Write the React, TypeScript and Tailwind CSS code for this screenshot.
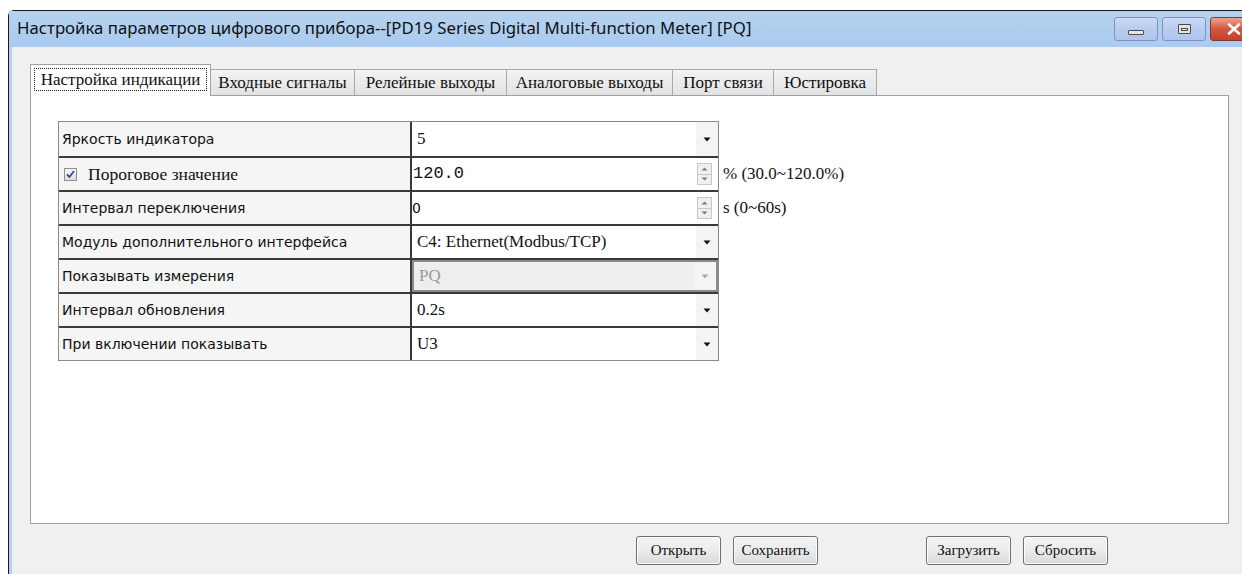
import type { ReactNode } from "react";

const tabs = [
  "Настройка индикации",
  "Входные сигналы",
  "Релейные выходы",
  "Аналоговые выходы",
  "Порт связи",
  "Юстировка",
];

const tabWidths = ["w-[181px]", "w-[145px]", "w-[153px]", "w-[167px]", "w-[102px]", "w-[104px]"];

function DropArrow({ muted = false }: { muted?: boolean }) {
  return (
    <div className="flex h-full w-[22px] items-center justify-center bg-[#f4f4f4]">
      <svg width="8" height="5" viewBox="0 0 8 5">
        <path d="M0.5 0.5h7L4 4.5z" fill={muted ? "#a8a8a8" : "#101010"} />
      </svg>
    </div>
  );
}

function Spinner() {
  return (
    <div className="mr-[6px] flex h-[22px] w-[15px] flex-col border border-[#c8c8c8] bg-[#eef0f3]">
      <div className="flex flex-1 items-center justify-center border-b border-[#c8c8c8]">
        <svg width="7" height="4" viewBox="0 0 7 4">
          <path d="M0.5 3.5L3.5 0.5 6.5 3.5z" fill="#6d7f94" />
        </svg>
      </div>
      <div className="flex flex-1 items-center justify-center">
        <svg width="7" height="4" viewBox="0 0 7 4">
          <path d="M0.5 0.5h6L3.5 3.5z" fill="#6d7f94" />
        </svg>
      </div>
    </div>
  );
}

function Row({
  label,
  children,
  first = false,
  disabled = false,
  suffix,
}: {
  label: ReactNode;
  children: ReactNode;
  first?: boolean;
  disabled?: boolean;
  suffix?: string;
}) {
  return (
    <div className="relative flex h-[34px]">
      <div
        className={`flex w-[661px] ${first ? "" : "border-t-2 border-[#3a3a3a]"}`}
      >
        <div className="flex w-[353px] items-center border-r-2 border-[#3a3a3a] bg-[#f5f5f5] pl-[3px] font-['DejaVu_Sans',sans-serif] text-[14px] text-[#111]">
          {label}
        </div>
        <div
          className={`flex flex-1 items-center justify-between ${
            disabled ? "border-2 border-[#8a8a8a] bg-[#eeeeee]" : "bg-white"
          }`}
        >
          {children}
        </div>
      </div>
      {suffix ? (
        <span className="absolute left-[664px] top-[5px] whitespace-nowrap font-['Liberation_Serif',serif] text-[17px] text-[#111]">
          {suffix}
        </span>
      ) : null}
    </div>
  );
}

function SerifValue({ children, muted = false }: { children: ReactNode; muted?: boolean }) {
  return (
    <span
      className={`pl-[5px] font-['Liberation_Serif',serif] text-[17px] ${
        muted ? "text-[#9a9a9a]" : "text-[#111]"
      }`}
    >
      {children}
    </span>
  );
}

function DialogButton({ label }: { label: string }) {
  return (
    <button className="h-[29px] w-[85px] rounded-[3px] border border-[#707070] bg-gradient-to-b from-[#f4f4f4] via-[#ebebeb] to-[#d9d9d9] font-['Liberation_Serif',serif] text-[15px] text-[#111] shadow-[inset_0_0_0_1px_#fcfcfc]">
      {label}
    </button>
  );
}

function TitleButton({ kind }: { kind: "min" | "max" | "close" }) {
  if (kind === "close") {
    return (
      <div className="flex h-[24px] w-[48px] items-center justify-center rounded-[3px] border border-[#7a3a34] bg-gradient-to-b from-[#e8a393] via-[#d2553f] to-[#c8402c]">
        <svg width="14" height="12" viewBox="0 0 14 12">
          <path
            d="M2 1.5L12 10.5M12 1.5L2 10.5"
            stroke="#ffffff"
            strokeWidth="2.6"
            strokeLinecap="round"
          />
        </svg>
      </div>
    );
  }
  return (
    <div className="flex h-[24px] w-[44px] items-center justify-center rounded-[3px] border border-[#7f93c2] bg-gradient-to-b from-[#cdd9f3] via-[#b8cbee] to-[#aec6ec]">
      {kind === "min" ? (
        <div className="mt-[6px] h-[5px] w-[16px] rounded-[1px] border border-[#4a4a4a] bg-[#e6e6e6]" />
      ) : (
        <div className="flex h-[10px] w-[13px] items-center justify-center rounded-[1px] border border-[#4a4a4a] bg-[#e6e6e6]">
          <div className="h-[3px] w-[7px] border border-[#4a4a4a]" />
        </div>
      )}
    </div>
  );
}

export default function App() {
  return (
    <div className="h-[574px] w-[1242px] overflow-hidden bg-white pl-[8px] pt-[10px]">
      <div className="flex h-[600px] w-[1260px] flex-col rounded-tl-[6px] border-l border-t border-[#1a1a1a]">
        {/* caption */}
        <div className="flex h-[36px] items-start bg-gradient-to-b from-[#b6d2ee] to-[#a9cbf0] pl-[8px]">
          <span className="mt-[7px] whitespace-nowrap font-['Noto_Sans',sans-serif] text-[16.8px] leading-[20px] text-[#111]">
            Настройка параметров цифрового прибора--[PD19 Series Digital Multi-function Meter] [PQ]
          </span>
          <div className="ml-auto mr-[10px] mt-[6px] flex gap-[4px]">
            <TitleButton kind="min" />
            <TitleButton kind="max" />
            <TitleButton kind="close" />
          </div>
        </div>

        <div className="flex flex-1 border-l-[3px] border-[#b9cff0] bg-[#f0f0f0]">
          <div className="flex flex-col pl-[18px] pt-[18px]">
            {/* tab strip */}
            <div className="flex h-[30px] items-end pl-[2px]">
              {tabs.map((t, i) =>
                i === 0 ? (
                  <div
                    key={t}
                    className={`relative z-10 -mb-[1px] -ml-[2px] h-[32px] ${tabWidths[i]} border border-b-0 border-[#a0a0a0] bg-white px-[3px] pt-[3px]`}
                  >
                    <div className="flex h-[23px] items-center justify-center whitespace-nowrap border border-dotted border-[#222] font-['Liberation_Serif',serif] text-[17px] text-[#111]">
                      {t}
                    </div>
                  </div>
                ) : (
                  <div
                    key={t}
                    className={`-ml-px flex h-[26px] ${tabWidths[i]} items-center justify-center whitespace-nowrap border border-b-0 border-[#a9a9a9] bg-gradient-to-b from-[#f2f2f2] to-[#e3e3e3] font-['Liberation_Serif',serif] text-[17px] text-[#111]`}
                  >
                    {t}
                  </div>
                )
              )}
            </div>

            {/* tab page */}
            <div className="h-[429px] w-[1199px] border border-[#a0a0a0] bg-white pl-[27px] pt-[25px]">
              <div className="w-[661px] border border-[#8a8a8a]">
                <Row label="Яркость индикатора" first>
                  <SerifValue>5</SerifValue>
                  <DropArrow />
                </Row>
                <Row
                  label={
                    <span className="flex items-center gap-[11px]">
                      <span className="ml-[2px] flex h-[13px] w-[13px] items-center justify-center border border-[#8f8f8f] bg-gradient-to-b from-[#f4f4f4] to-[#dedede]">
                        <svg width="9" height="9" viewBox="0 0 9 9">
                          <path
                            d="M1 4.5L3.5 7L8 1"
                            fill="none"
                            stroke="#2d4f9e"
                            strokeWidth="1.8"
                          />
                        </svg>
                      </span>
                      <span className="font-['Liberation_Serif',serif] text-[17.5px]">
                        Пороговое значение
                      </span>
                    </span>
                  }
                  suffix="% (30.0~120.0%)"
                >
                  <span className="pl-[1px] font-['Liberation_Mono',monospace] text-[17px] text-[#111]">
                    120.0
                  </span>
                  <Spinner />
                </Row>
                <Row label="Интервал переключения" suffix="s (0~60s)">
                  <span className="font-['DejaVu_Sans',sans-serif] text-[14px] text-[#111]">0</span>
                  <Spinner />
                </Row>
                <Row label="Модуль дополнительного интерфейса">
                  <SerifValue>C4: Ethernet(Modbus/TCP)</SerifValue>
                  <DropArrow />
                </Row>
                <Row label="Показывать измерения" disabled>
                  <SerifValue muted>PQ</SerifValue>
                  <DropArrow muted />
                </Row>
                <Row label="Интервал обновления">
                  <SerifValue>0.2s</SerifValue>
                  <DropArrow />
                </Row>
                <Row label="При включении показывать">
                  <SerifValue>U3</SerifValue>
                  <DropArrow />
                </Row>
              </div>
            </div>

            {/* dialog buttons */}
            <div className="mt-[12px] flex pl-[606px]">
              <div className="flex gap-[12px]">
                <DialogButton label="Открыть" />
                <DialogButton label="Сохранить" />
              </div>
              <div className="ml-[108px] flex gap-[12px]">
                <DialogButton label="Загрузить" />
                <DialogButton label="Сбросить" />
              </div>
            </div>
          </div>
        </div>
      </div>
    </div>
  );
}
